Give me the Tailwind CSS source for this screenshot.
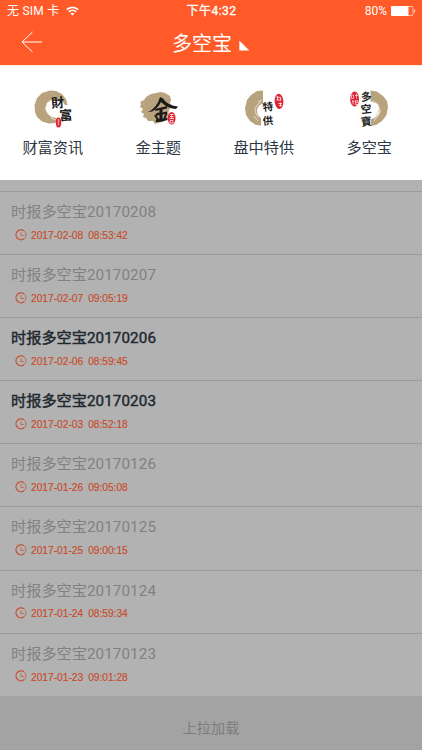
<!DOCTYPE html>
<html lang="zh-CN">
<head>
  <meta charset="UTF-8" />
  <meta name="viewport" content="width=device-width, initial-scale=1.0"/>
  <title>多空宝</title>
  <script src="https://cdn.jsdelivr.net/npm/@tailwindcss/browser@4"></script>
</head>
<body class="h-[750px] flex flex-col overflow-hidden bg-[#a3a3a3] font-['Roboto','Noto_Sans_CJK_SC',sans-serif]">

  <header class="h-[65px] shrink-0 bg-[#ff5a27] text-white">
    <div class="h-[22px] grid grid-cols-3 items-center pl-[7px] pr-[6px] text-[12px] leading-[22px]">
      <div class="flex items-center">
        <span class="tracking-[0.25px] whitespace-pre">无 SIM 卡</span>
        <svg class="ml-[6px] w-[13px] h-[10px]" viewBox="0 0 13 10" fill="none" stroke="white" stroke-width="1.7">
          <path d="M.8 3.6a8.2 8.2 0 0 1 11.4 0M2.9 5.9a5.2 5.2 0 0 1 7.2 0"/>
          <path d="M6.5 9.6 4.5 7.6a2.9 2.9 0 0 1 4 0z" fill="white" stroke="none"/>
        </svg>
      </div>
      <div class="text-center tracking-[0.5px] [-webkit-text-stroke:0.3px_white]">下午4:32</div>
      <div class="flex items-center justify-end">
        <span>80%</span>
        <svg class="ml-[4px] w-[25px] h-[10px]" viewBox="0 0 25 10">
          <rect x=".5" y=".5" width="21.5" height="9" rx="1" fill="none" stroke="white" stroke-opacity=".6"/>
          <rect x="0" y="0" width="17.5" height="10" rx="1" fill="white"/>
          <path d="M23.3 3q1.8 2 0 4z" fill="white"/>
        </svg>
      </div>
    </div>
    <div class="h-[43px] grid grid-cols-[60px_1fr_60px] items-center">
      <svg class="ml-[21px] mt-[-4px] w-[22px] h-[22px]" viewBox="0 0 22 22" fill="none" stroke="white" stroke-width="1">
        <path d="M11.5 1 1 11l10.5 10M1 11h20"/>
      </svg>
      <div class="flex items-center justify-center">
        <span class="text-[20px] leading-[42px]">多空宝</span>
        <svg class="ml-[7px] mt-[4px] w-[11px] h-[11px]" viewBox="0 0 11 11"><path d="M.3.5v10h10z" fill="white"/></svg>
      </div>
    </div>
  </header>

  <!-- dropdown menu -->
  <nav class="h-[115px] shrink-0 bg-white border-t border-[#fff0e6] grid grid-cols-4 pt-[22px] text-[#2e3742] text-[15.2px] leading-[22px]">
    <a class="flex flex-col items-center">
      <svg class="w-[42px] h-[42px]" viewBox="0 0 42 42">
        <path d="M18 2.500 24 3 30 6 34 11 35.500 17 33 17 30 13 25 11.500 19 12 14.500 15.500 13.500 20 15 25 19 28.500 24 30 26 32 23 35 17 35.500 10 33.500 5 29 3 24 2.500 17 5 10 10 5Z" fill="#b9a27e"/>
        <path d="m15 15 4-3M13 21l2-5M16 26l-3-5M21 30l-5-4M24 32l-5-2" stroke="#e3d9c6" stroke-width="1" fill="none"/>
        <text x="19" y="19.500" font-size="13" font-weight="700" fill="#1b1b1b" transform="rotate(-5 25 15)">財</text>
        <text x="27.500" y="32" font-size="13" font-weight="700" fill="#1b1b1b" transform="rotate(-5 34 28)">富</text>
        <ellipse cx="26.5" cy="34.5" rx="2.700" ry="5" fill="#dc2433"/>
        <path d="M25.300 32h2.500M25 34h3M26.500 31v6M25.300 36.500h2" stroke="#f7b9bd" stroke-width=".6"/>
      </svg>
      <span class="mt-[7px]">财富资讯</span>
    </a>
    <a class="flex flex-col items-center">
      <svg class="w-[42px] h-[42px]" viewBox="0 0 42 42">
        <path d="M14 6 19 5 24 4 28 5 33 8 34 12 33 15 35 18 32 22 31 28 28 31 25 34 18 36 16 33 11 33 9 30 6 29 7 26 4 24 6 21 3 19 4 16 3 14 7 12 9 9Z" fill="#b9a27e"/>
        <path d="M23 9Q20 20 11 24l4-.5Q21 20 24 14q7 7 15 7l2-2.500q-10-.5-15-8zM18 21l12-3v2.500l-4.500 1v3l4.500-1v2l-4.500 1v4l5-1v2.500q-6 2.500-12 2l1-3 3-.5v-3.500l-4 1 1-3 3-.5v-2.500l-4 1z" fill="#1a1a19"/>
        <path d="m18 27 2.500 4M29.500 25l-2 5" stroke="#1a1a19" stroke-width="2"/>
        <ellipse cx="34.600" cy="30.300" rx="3.900" ry="6.300" fill="#df2634"/>
        <path d="M33 26.500h3.500M33 28.500h3.500M34.700 26v4.500M32.500 30.500h4.500M33 32.500h3v2.500h-3z" stroke="#ffe8e8" stroke-width=".8" fill="none"/>
      </svg>
      <span class="mt-[7px]">金主题</span>
    </a>
    <a class="flex flex-col items-center">
      <svg class="w-[42px] h-[42px]" viewBox="0 0 42 42">
        <path d="M20 2.500v13l-4 2-2 4 .5 5 3.500 3.500v7.500l-5-.5-6-4-4-6-1-7 2-8 4-5 6-4Z" fill="#b9a27e"/>
        <path d="m18 14-4 3-2 4 1 5 3 4M19 12l-4 2M15 33l-4-5" stroke="#e3d9c6" stroke-width="1" fill="none"/>
        <text x="19.700" y="22.700" font-size="10.500" font-weight="700" fill="#1b1b1b" transform="rotate(-5 24 19)">特</text>
        <text x="19.700" y="36.700" font-size="10.500" font-weight="700" fill="#1b1b1b" transform="rotate(-5 24 33)">供</text>
        <ellipse cx="36" cy="13.300" rx="4.400" ry="7.600" fill="#de2333" transform="rotate(-4 36 13)"/>
        <path d="M33.500 9l4 .5M33.500 12h5M34.500 8v4M37.500 9v3.500M35.500 15.500h3.500M36 17.500h3M37.500 14.500v4" stroke="#ffe2e2" stroke-width=".9"/>
      </svg>
      <span class="mt-[7px]">盘中特供</span>
    </a>
    <a class="flex flex-col items-center">
      <svg class="w-[42px] h-[42px]" viewBox="0 0 42 42">
        <path d="M22.500 2.500 29 3.500 35 8 39 13 40 19 38.500 27 34 33 28 37 23 38v-7l4-1 4-4 .5-5-2-5-7-3Z" fill="#b9a27e"/>
        <path d="m25 13 5 3 1.500 5-3 6-4 4M33 22l-3 6-4 5" stroke="#e3d9c6" stroke-width="1" fill="none"/>
        <text x="12.700" y="12.700" font-size="10.800" font-weight="700" fill="#1b1b1b" transform="rotate(-6 18 8)">多</text>
        <text x="12.700" y="25" font-size="10.800" font-weight="700" fill="#1b1b1b" transform="rotate(-6 18 21)">空</text>
        <text x="12.700" y="37.500" font-size="10.800" font-weight="700" fill="#1b1b1b" transform="rotate(-6 18 33)">寶</text>
        <ellipse cx="6.600" cy="11" rx="4.400" ry="7.600" fill="#de2333"/>
        <path d="M3.500 7v3.500h2V7zM7 7.500h3M8.500 5.500v5M4 13.500h2.500M5 12v4.500M7.500 12.500v4.500M7.500 12.500h2v2h-2M8 16.500h2" stroke="#ffe2e2" stroke-width=".7" fill="none"/>
      </svg>
      <span class="mt-[7px]">多空宝</span>
    </a>
  </nav>

  <main class="shrink-0 bg-[#b2b2b2] pt-[11px]">
    <ul id="lista"></ul>
    <div class="border-t border-[#a2a2a9] bg-[#a3a3a3] h-[60px] pt-[19px] text-center text-[14.2px] leading-[24px] text-[#7d7d7d]">上拉加载</div>
  </main>

  <script>
    const items = [
      { day: '20170208', date: '2017-02-08', time: '08:53:42' },
      { day: '20170207', date: '2017-02-07', time: '09:05:19' },
      { day: '20170206', date: '2017-02-06', time: '08:59:45', unread: true },
      { day: '20170203', date: '2017-02-03', time: '08:52:18', unread: true },
      { day: '20170126', date: '2017-01-26', time: '09:05:08' },
      { day: '20170125', date: '2017-01-25', time: '09:00:15' },
      { day: '20170124', date: '2017-01-24', time: '08:59:34' },
      { day: '20170123', date: '2017-01-23', time: '09:01:28' }
    ];

    document.getElementById('lista').innerHTML = items.map(it => `
      <li class="h-[63.1px] border-t border-[#9b9b9f] pl-[11px] pt-[9px]">
        <p class="text-[15.2px] leading-[23px] ${it.unread ? 'text-[#22282f] [-webkit-text-stroke:0.45px_#22282f]' : 'text-[#818181]'}">时报多空宝<span class="tracking-[0.1px]">${it.day}</span></p>
        <div class="flex items-center pl-[4px] mt-[3px] h-[17px] text-[#c94a28] font-['Liberation_Sans',sans-serif] text-[10.2px] [-webkit-text-stroke:0.15px_#c94a28]">
          <svg class="w-[12px] h-[12px] mt-[-2px] mr-[4px]" viewBox="0 0 12 12" fill="none" stroke="#c94a28">
            <path d="M9 1.800A5 5 0 1 0 9 9.800" stroke-width="1.200"/>
            <path d="M9 1.800a5 5 0 0 1 0 8M6 3.200v3.300h2.800" stroke-width=".7"/>
          </svg>
          <span>${it.date}</span><span class="ml-[5px]">${it.time}</span>
        </div>
      </li>`).join('');
  </script>
</body>
</html>
